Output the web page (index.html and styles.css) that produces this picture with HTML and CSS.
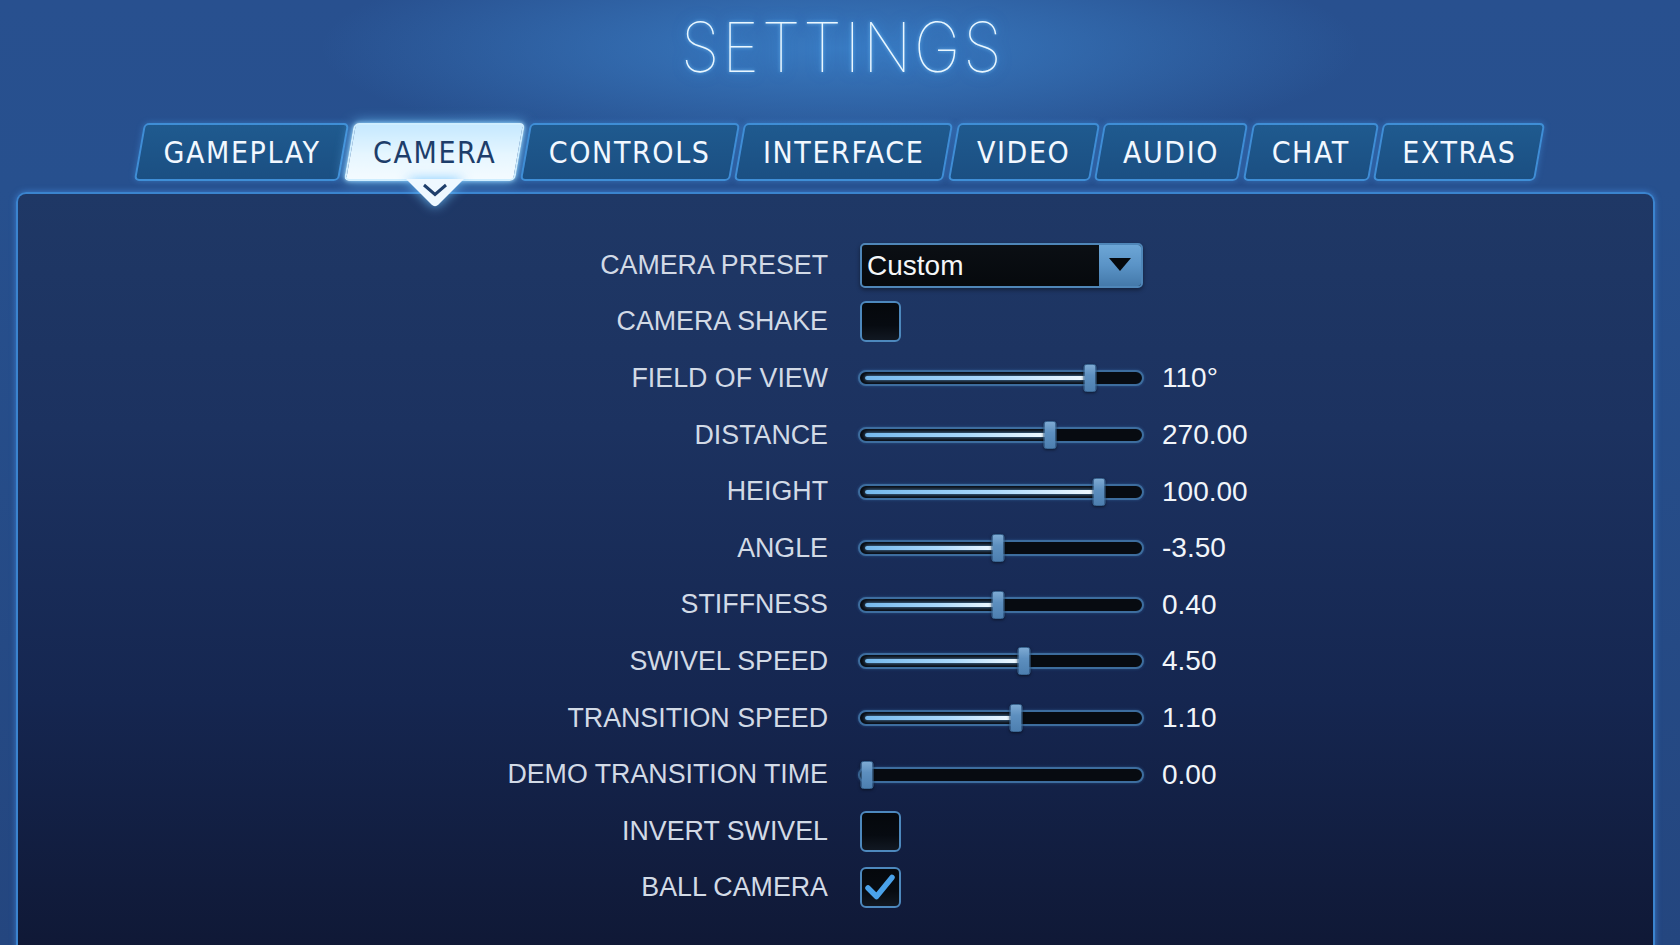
FILE: index.html
```html
<!DOCTYPE html>
<html lang="en">
<head>
<meta charset="utf-8">
<title>Settings</title>
<link rel="stylesheet" href="styles.css">
</head>
<body>
<div class="screen">
  <h1 class="title">SETTINGS</h1>
  <nav class="tabs">
    <div class="tab"><span>GAMEPLAY</span></div>
    <div class="tab active"><span>CAMERA</span>
      <svg class="pointer" width="58" height="29" viewBox="0 0 58 29"><path d="M0 0 H58 L32.5 25.5 Q29 29 25.5 25.5 Z" fill="#eef8ff"/><polyline points="18,6 29,15.5 40,6" fill="none" stroke="#1e3f6c" stroke-width="3"/></svg>
    </div>
    <div class="tab"><span>CONTROLS</span></div>
    <div class="tab"><span>INTERFACE</span></div>
    <div class="tab"><span>VIDEO</span></div>
    <div class="tab"><span>AUDIO</span></div>
    <div class="tab"><span>CHAT</span></div>
    <div class="tab"><span>EXTRAS</span></div>
  </nav>
  <section class="panel">
    <div class="rows">
      <div class="label">CAMERA PRESET</div>
      <div class="control">
        <div class="dropdown"><span class="dd-text">Custom</span><span class="dd-btn"><svg width="22" height="14" viewBox="0 0 22 14"><path d="M0 0 H22 L11 13 Z" fill="#05080c"/></svg></span></div>
      </div>
      <div class="value"></div>

      <div class="label">CAMERA SHAKE</div>
      <div class="control"><div class="check"></div></div>
      <div class="value"></div>

      <div class="label">FIELD OF VIEW</div>
      <div class="control"><div class="slider" style="--v:81.5%"><div class="fill"></div><div class="thumb"></div></div></div>
      <div class="value">110°</div>

      <div class="label">DISTANCE</div>
      <div class="control"><div class="slider" style="--v:67.5%"><div class="fill"></div><div class="thumb"></div></div></div>
      <div class="value">270.00</div>

      <div class="label">HEIGHT</div>
      <div class="control"><div class="slider" style="--v:84.6%"><div class="fill"></div><div class="thumb"></div></div></div>
      <div class="value">100.00</div>

      <div class="label">ANGLE</div>
      <div class="control"><div class="slider" style="--v:49.1%"><div class="fill"></div><div class="thumb"></div></div></div>
      <div class="value">-3.50</div>

      <div class="label">STIFFNESS</div>
      <div class="control"><div class="slider" style="--v:48.8%"><div class="fill"></div><div class="thumb"></div></div></div>
      <div class="value">0.40</div>

      <div class="label">SWIVEL SPEED</div>
      <div class="control"><div class="slider" style="--v:58%"><div class="fill"></div><div class="thumb"></div></div></div>
      <div class="value">4.50</div>

      <div class="label">TRANSITION SPEED</div>
      <div class="control"><div class="slider" style="--v:55.2%"><div class="fill"></div><div class="thumb"></div></div></div>
      <div class="value">1.10</div>

      <div class="label">DEMO TRANSITION TIME</div>
      <div class="control"><div class="slider" style="--v:2.4%"><div class="fill"></div><div class="thumb"></div></div></div>
      <div class="value">0.00</div>

      <div class="label">INVERT SWIVEL</div>
      <div class="control"><div class="check"></div></div>
      <div class="value"></div>

      <div class="label">BALL CAMERA</div>
      <div class="control"><div class="check"><svg width="37" height="37" viewBox="0 0 37 37"><path d="M6 19 L14.5 27.5 L30 8.5" fill="none" stroke="#4aa2ea" stroke-width="5.5" stroke-linecap="round" stroke-linejoin="round"/></svg></div></div>
      <div class="value"></div>
    </div>
  </section>
</div>
</body>
</html>
```

FILE: styles.css
```css
html, body {
  margin: 0;
  padding: 0;
  background: #264d8b;
  overflow: hidden;
}

.screen {
  width: 1680px;
  height: 945px;
  overflow: hidden;
  background:
    radial-gradient(ellipse 520px 110px at 50% 48px, rgba(64, 140, 214, 0.7), rgba(64, 140, 214, 0) 100%),
    linear-gradient(180deg, #28508f 0%, #27508e 20%, #24467f 100%);
  font-family: "Liberation Sans", Arial, sans-serif;
  display: flex;
  flex-direction: column;
}

.title {
  margin: 0;
  height: 82px;
  padding-top: 13px;
  padding-left: 6px;
  box-sizing: border-box;
  text-align: center;
  font-family: Inter, "DejaVu Sans", sans-serif;
  font-weight: 100;
  font-size: 69px;
  line-height: 69px;
  letter-spacing: 3px;
  color: #eaf7ff;
  text-shadow: 0 0 4px rgba(120, 200, 255, 0.9), 0 0 14px rgba(60, 150, 240, 0.8);
  transform: scaleX(0.91);
}

.tabs {
  margin-top: 41px;
  height: 58px;
  display: flex;
  justify-content: center;
  gap: 4.5px;
  position: relative;
  z-index: 2;
}

.tab {
  position: relative;
  height: 58px;
  padding: 0 24px;
  display: flex;
  align-items: center;
  font-family: "DejaVu Sans Condensed", "DejaVu Sans", sans-serif;
  font-stretch: condensed;
  font-size: 30px;
  letter-spacing: 1.6px;
  color: #f2f8ff;
}

.tab::before {
  content: "";
  position: absolute;
  inset: 0;
  transform: skewX(-10deg);
  border: 2px solid #3f8ed6;
  border-radius: 5px;
  background: linear-gradient(180deg, #1f5a8f 0%, #1b4f82 100%);
  box-shadow: 0 0 6px rgba(70, 150, 230, 0.45);
}

.tab span {
  position: relative;
}

.tab.active {
  color: #1d3d6a;
}

.tab.active::before {
  border-color: #cfeeff;
  background: linear-gradient(180deg, #c6e9ff 0%, #e6f6ff 55%, #f4fbff 100%);
  box-shadow: 0 0 14px rgba(110, 195, 255, 0.9), 0 0 4px rgba(200, 240, 255, 0.9);
}

.pointer {
  position: absolute;
  top: 56px;
  left: 50%;
  transform: translateX(-50%);
  filter: drop-shadow(0 0 6px rgba(110, 195, 255, 0.9));
}

.panel {
  margin: 11px 25px 0 16px;
  flex: 1 0 auto;
  height: 780px;
  border: 2px solid #3b84cf;
  border-bottom: none;
  border-radius: 10px 10px 0 0;
  background: linear-gradient(180deg, #1f3866 0%, #1c3260 30%, #152650 65%, #0f1733 100%);
  box-shadow: 0 0 6px rgba(80, 160, 255, 0.55);
  position: relative;
  z-index: 1;
}

.rows {
  padding-top: 43px;
  display: grid;
  grid-template-columns: 810px 286px auto;
  grid-auto-rows: 56.6px;
  column-gap: 32px;
  align-items: center;
}

.rows .value {
  margin-left: -16px;
}

.label {
  text-align: right;
  font-size: 26.8px;
  color: #d2dae6;
}

.value {
  font-size: 28px;
  color: #f1f5fa;
}

.control {
  display: flex;
  align-items: center;
}

.dropdown {
  width: 283px;
  height: 45px;
  box-sizing: border-box;
  border: 2px solid #4f86b8;
  border-radius: 5px;
  display: flex;
  overflow: hidden;
  background: linear-gradient(180deg, #0b0f14 0%, #06090d 100%);
  box-shadow: 0 2px 4px rgba(0, 0, 0, 0.4);
}

.dd-text {
  flex: 1;
  padding-left: 5px;
  font-size: 28px;
  line-height: 41px;
  color: #f4f6f8;
}

.dd-btn {
  width: 42px;
  display: flex;
  align-items: center;
  justify-content: center;
  background: linear-gradient(180deg, #6da6d6 0%, #5a93c6 50%, #4479aa 100%);
}

.check {
  width: 41px;
  height: 41px;
  box-sizing: border-box;
  border: 2px solid #4d88bd;
  border-radius: 6px;
  background: linear-gradient(180deg, #05080c 0%, #070b11 60%, #111822 100%);
  display: flex;
  align-items: center;
  justify-content: center;
}

.slider {
  position: relative;
  width: 286px;
  height: 16px;
  margin-left: -2px;
  box-sizing: border-box;
  border: 2px solid #3d6d9e;
  border-radius: 8px;
  background: #070b11;
  box-shadow: 0 0 3px rgba(80, 150, 220, 0.35);
}

.fill {
  position: absolute;
  left: 5px;
  top: 4px;
  height: 4px;
  width: calc(var(--v) - 6px);
  border-radius: 2px;
  background: linear-gradient(90deg, #74b8ec 0%, #a9d8fb 55%, #f2faff 100%);
  box-shadow: 0 0 4px rgba(120, 190, 255, 0.8);
}

.thumb {
  position: absolute;
  left: var(--v);
  top: 50%;
  width: 13px;
  height: 28px;
  transform: translate(-50%, -50%);
  box-sizing: border-box;
  border: 1px solid #3a6792;
  border-radius: 3px;
  background: linear-gradient(180deg, #7eaad3 0%, #5d8fbf 40%, #4d7fb0 100%);
  box-shadow: 0 1px 3px rgba(0, 0, 0, 0.5);
}
```
